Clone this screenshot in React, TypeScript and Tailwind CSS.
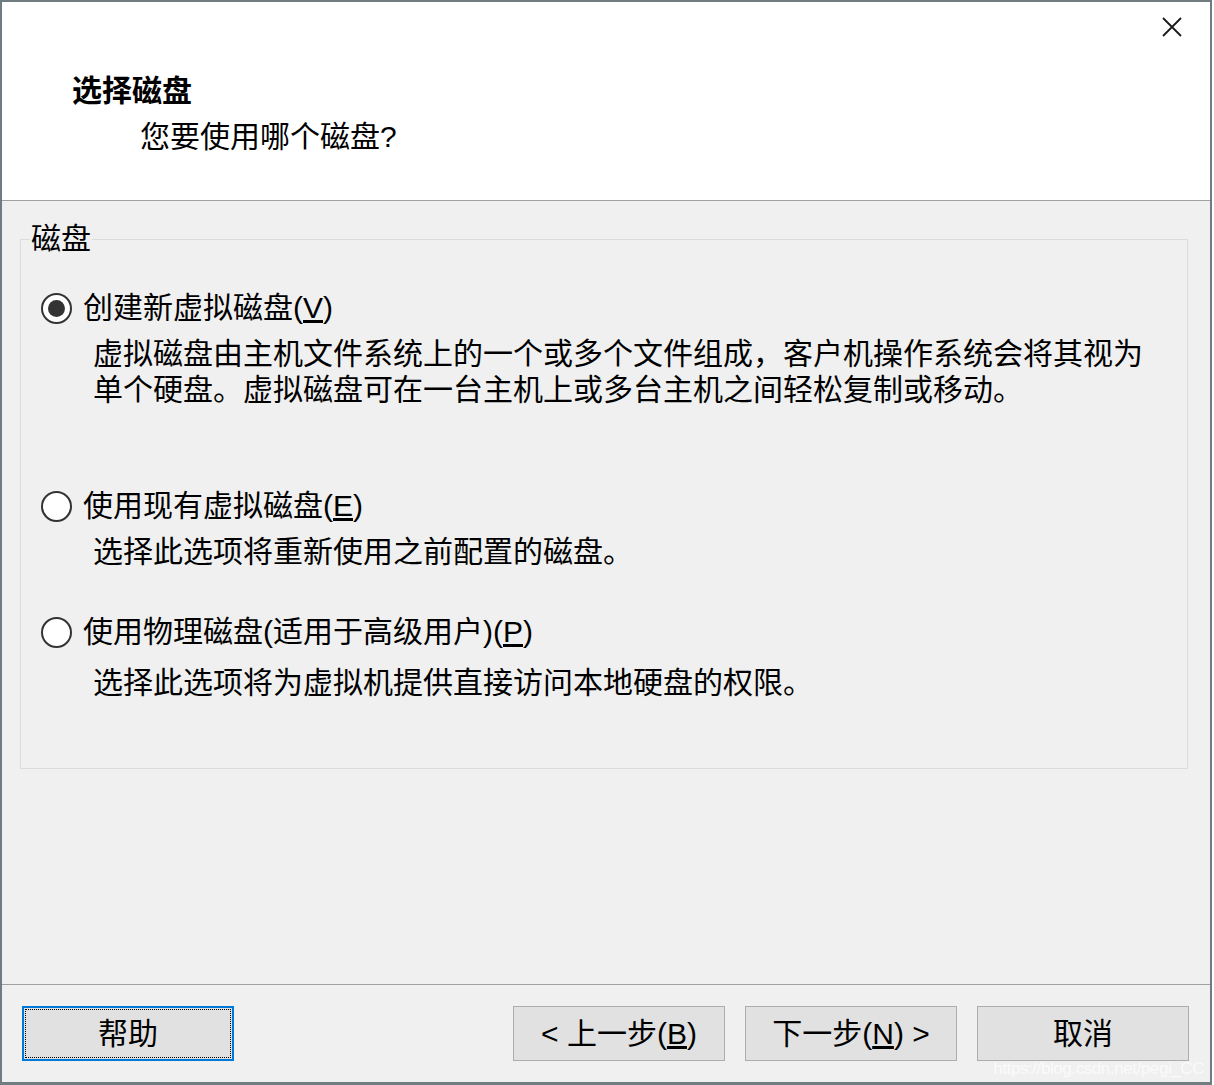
import type { ReactNode } from "react";

function Radio({ checked }: { checked?: boolean }) {
  return (
    <span className="grid h-[31px] w-[31px] shrink-0 place-items-center rounded-full border-2 border-[#333333] bg-white">
      {checked && <span className="h-[17px] w-[17px] rounded-full bg-[#333333]" />}
    </span>
  );
}

function Option({
  label,
  checked,
  gap = "mt-[10px]",
  children,
}: {
  label: ReactNode;
  checked?: boolean;
  gap?: string;
  children: ReactNode;
}) {
  return (
    <div>
      <div className="flex h-[36px] items-center gap-[11px]">
        <Radio checked={checked} />
        <span className="leading-[36px]">{label}</span>
      </div>
      <div className={`${gap} pl-[52px] leading-[36px]`}>{children}</div>
    </div>
  );
}

function Btn({ children, focused }: { children: ReactNode; focused?: boolean }) {
  return (
    <button
      type="button"
      className={
        focused
          ? "h-[55px] w-[212px] border-2 border-[#0078d7] bg-[#e1e1e1] p-[1px] text-[30px] text-black"
          : "h-[55px] w-[212px] border border-[#adadad] bg-[#e1e1e1] text-[30px] text-black"
      }
    >
      {focused ? (
        <span className="flex h-full w-full items-center justify-center border border-dotted border-black">{children}</span>
      ) : (
        children
      )}
    </button>
  );
}

export default function App() {
  return (
    <div className="relative h-[1085px] w-[1214px] bg-white font-['Liberation_Sans','Noto_Sans_CJK_SC',sans-serif] text-[30px] text-black">
      <div className="flex h-[1085px] w-[1212px] flex-col border-x-2 border-t-2 border-b-[3px] border-[#6f7c80]">
        {/* header */}
        <div className="relative h-[199px] shrink-0 border-b border-[#a0a0a0] bg-white">
          <div className="pl-[70px] pt-[71px] font-bold leading-[36px]">选择磁盘</div>
          <div className="mt-[10px] pl-[138px] leading-[36px]">您要使用哪个磁盘?</div>
          <button type="button" className="absolute right-[24px] top-[11px] p-[2px]" aria-label="关闭">
            <svg width="24" height="24" viewBox="0 0 24 24" fill="none" stroke="#1a1a1a" strokeWidth="1.8">
              <path d="M3 3L21 21M21 3L3 21" />
            </svg>
          </button>
        </div>

        {/* body */}
        <div className="flex flex-1 flex-col bg-[#f0f0f0]">
          <div className="ml-[18px] mr-[22px] mt-[38px] h-[530px] border border-[#dcdcdc] pl-[20px]">
            <div className="-ml-[11px] -mt-[19px] w-fit bg-[#f0f0f0] px-[1px] leading-[36px]">磁盘</div>
            <div className="mt-[33px]">
              <Option
                checked
                label={
                  <>
                    创建新虚拟磁盘(<u>V</u>)
                  </>
                }
              >
                虚拟磁盘由主机文件系统上的一个或多个文件组成，客户机操作系统会将其视为
                <br />
                单个硬盘。虚拟磁盘可在一台主机上或多台主机之间轻松复制或移动。
              </Option>
            </div>
            <div className="mt-[80px]">
              <Option
                label={
                  <>
                    使用现有虚拟磁盘(<u>E</u>)
                  </>
                }
              >
                选择此选项将重新使用之前配置的磁盘。
              </Option>
            </div>
            <div className="mt-[44px]">
              <Option
                gap="mt-[15px]"
                label={
                  <>
                    使用物理磁盘(适用于高级用户)(<u>P</u>)
                  </>
                }
              >
                选择此选项将为虚拟机提供直接访问本地硬盘的权限。
              </Option>
            </div>
          </div>
          <div className="flex-1" />
          <div className="h-[98px] shrink-0 border-t border-[#a0a0a0]">
            <div className="flex items-center pl-[20px] pr-[21px] pt-[21px]">
              <Btn focused>帮助</Btn>
              <div className="flex-1" />
              <div className="flex gap-[20px]">
                <Btn>
                  &lt; 上一步(<u>B</u>)
                </Btn>
                <Btn>
                  下一步(<u>N</u>) &gt;
                </Btn>
                <Btn>取消</Btn>
              </div>
            </div>
          </div>
        </div>
      </div>
      <div className="absolute bottom-[8px] right-[10px] text-[17px] leading-none tracking-tight text-white/70">
        https://blog.csdn.net/pegi_CC
      </div>
    </div>
  );
}
